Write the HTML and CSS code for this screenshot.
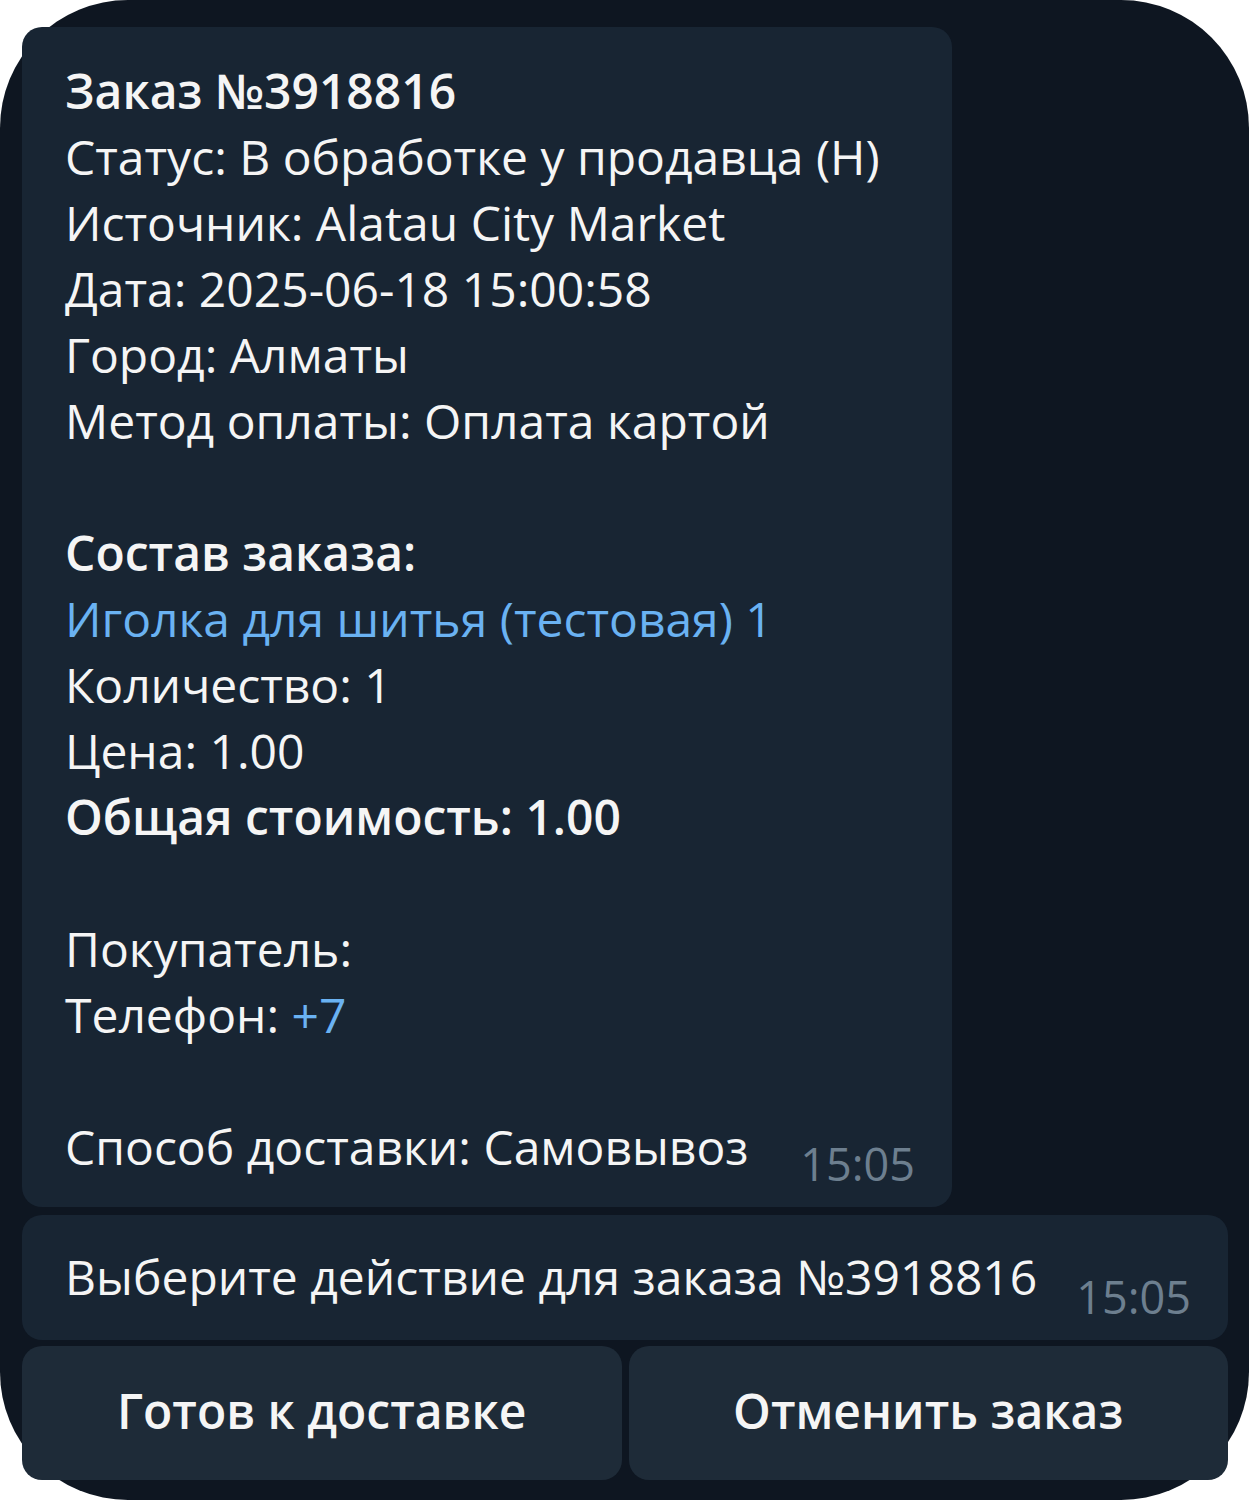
FILE: index.html
```html
<!DOCTYPE html>
<html lang="ru">
<head>
    <meta charset="UTF-8">
    <meta name="viewport" content="width=device-width, initial-scale=1.0">
    <title>Заказ №3918816</title>
    <link rel="stylesheet" href="styles.css">
</head>
<body>
    <div class="chat">
        <!-- Order message -->
        <div class="bubble order">
            <div class="line bold">Заказ №3918816</div>
            <div class="line">Статус: В обработке у продавца (Н)</div>
            <div class="line">Источник: Alatau City Market</div>
            <div class="line">Дата: 2025-06-18 15:00:58</div>
            <div class="line">Город: Алматы</div>
            <div class="line">Метод оплаты: Оплата картой</div>
            <div class="line empty"></div>
            <div class="line bold">Состав заказа:</div>
            <div class="line link">Иголка для шитья (тестовая) 1</div>
            <div class="line">Количество: 1</div>
            <div class="line">Цена: 1.00</div>
            <div class="line bold">Общая стоимость: 1.00</div>
            <div class="line empty"></div>
            <div class="line">Покупатель:</div>
            <div class="line">Телефон: <span class="link">+7</span></div>
            <div class="line empty"></div>
            <div class="line">Способ доставки: Самовывоз</div>
            <span class="time">15:05</span>
        </div>

        <!-- Action prompt -->
        <div class="bubble prompt">
            <div class="line">Выберите действие для заказа №3918816</div>
            <span class="time">15:05</span>
        </div>

        <!-- Inline keyboard -->
        <div class="keyboard">
            <button class="key">Готов к доставке</button>
            <button class="key">Отменить заказ</button>
        </div>
    </div>
</body>
</html>
```

FILE: styles.css
```css
/* Telegram dark chat, zoomed */
body {
    margin: 0;
    background-color: #ffffff;
    font-family: "Open Sans", "Noto Sans", sans-serif;
}
.chat {
    width: 1249px;
    height: 1500px;
    box-sizing: border-box;
    padding: 27px 21px 0 22px;
    background-color: #0e1621;
    border-radius: 128px;
    display: flex;
    flex-direction: column;
    align-items: flex-start;
    gap: 8px;
}
.bubble {
    position: relative;
    box-sizing: border-box;
    background-color: #182533;
    border-radius: 20px;
    color: #f5f5f5;
    font-size: 48px;
    line-height: 66px;
}
.order {
    width: 930px;
    padding: 31px 40px 27px 43px;
}
.prompt {
    width: 100%;
    height: 125px;
    padding: 29px 40px 0 43px;
}
.line {
    white-space: nowrap;
}
.empty {
    height: 66px;
}
.bold {
    font-weight: 600;
}
.link {
    color: #6ab2f2;
}
.time {
    position: absolute;
    right: 37px;
    bottom: 18px;
    font-size: 45px;
    line-height: 50px;
    color: #6d7f8f;
}
.keyboard {
    width: 100%;
    display: flex;
    gap: 7px;
    margin-top: -2px;
}
.key {
    flex: 1;
    height: 134px;
    border: none;
    border-radius: 20px;
    background-color: #1e2b38;
    color: #f5f5f5;
    font-family: "Open Sans", "Noto Sans", sans-serif;
    font-size: 48px;
    font-weight: 600;
    padding: 0 0 6px;
}
```
